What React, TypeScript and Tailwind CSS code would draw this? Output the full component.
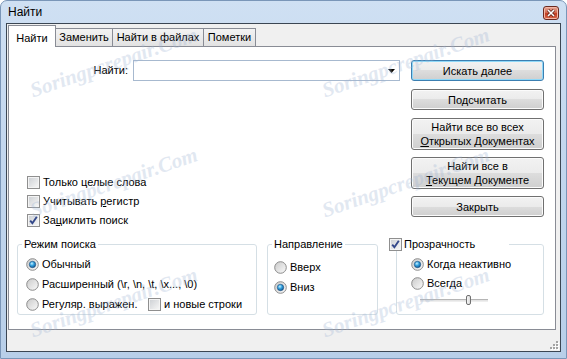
import clsx from "clsx";

function CheckBox({ checked = false }: { checked?: boolean }) {
  return (
    <span className="flex w-[13px] h-[13px] shrink-0 items-center justify-center border border-[#8f8f8f] bg-[#f4f4f4]">
      <span className="flex w-[9px] h-[9px] items-center justify-center bg-[linear-gradient(135deg,#cfd2d6,#f5f5f5)]">
        {checked && (
          <svg width="11" height="11" viewBox="0 0 11 11" className="shrink-0">
            <path d="M2.2 5.6 L4.4 8.2 L8.8 1.8" fill="none" stroke="#34488a" strokeWidth="1.9" />
          </svg>
        )}
      </span>
    </span>
  );
}

function Radio({ checked = false }: { checked?: boolean }) {
  return (
    <svg width="13" height="13" viewBox="0 0 13 13" className="shrink-0">
      <defs>
        <linearGradient id="rb-bg" x1="0" y1="0" x2="1" y2="1">
          <stop offset="0" stopColor="#c9c9c9" />
          <stop offset="1" stopColor="#fbfbfb" />
        </linearGradient>
        <radialGradient id="rb-dot" cx="0.4" cy="0.35" r="0.7">
          <stop offset="0" stopColor="#c8f1ff" />
          <stop offset="0.45" stopColor="#35a3e0" />
          <stop offset="1" stopColor="#0c4f8a" />
        </radialGradient>
      </defs>
      <circle cx="6.5" cy="6.5" r="5.8" fill="url(#rb-bg)" stroke="#8c8c8c" strokeWidth="1" />
      {checked && <circle cx="6.5" cy="6.5" r="3.2" fill="url(#rb-dot)" stroke="#1c4e7e" strokeWidth="0.6" />}
    </svg>
  );
}

function Btn({
  children,
  className,
  focused = false,
}: {
  children: React.ReactNode;
  className?: string;
  focused?: boolean;
}) {
  return (
    <button
      className={clsx(
        "w-[133px] flex flex-col items-center justify-center rounded-[3px] border text-[11px] leading-[14px] text-black bg-[linear-gradient(#f2f2f2,#ebebeb_50%,#dddddd_50%,#cfcfcf)]",
        focused
          ? "border-[#3c7fb1] shadow-[inset_0_0_0_1px_#8fd8f8]"
          : "border-[#707070] shadow-[inset_0_0_0_1px_#fbfbfb]",
        className
      )}
    >
      {children}
    </button>
  );
}

const tabs = [
  { label: "Заменить", w: "w-[58px]" },
  { label: "Найти в файлах", w: "w-[92px]" },
  { label: "Пометки", w: "w-[53px]" },
];

const marks = [
  "left-[113px] top-[62px]",
  "left-[405px] top-[62px]",
  "left-[113px] top-[182px]",
  "left-[405px] top-[182px]",
  "left-[113px] top-[302px]",
  "left-[405px] top-[302px]",
];

export default function App() {
  return (
    <div className="relative w-[567px] h-[359px] flex flex-col overflow-hidden rounded-t-[7px] border border-[#7a96b8] bg-[linear-gradient(#cfe0f3,#c3d7ee_40%,#b8cfe9)] font-['Liberation_Sans',Arial,sans-serif] text-[11px] text-black">
      {/* Title bar */}
      <div className="h-[22px] flex items-start justify-between pl-[7px] pr-[7px]">
        <span className="mt-[3px] text-[12px] leading-[16px]">Найти</span>
        <span className="mt-[5px] flex w-[16px] h-[14px] items-center justify-center rounded-[3px] border border-[#6b2a20] bg-[linear-gradient(#e9a999,#d16a52_45%,#c23d22_55%,#d9694c)] shadow-[inset_0_0_0_1px_#f3b7a6]">
          <svg width="8" height="8" viewBox="0 0 8 8">
            <path d="M1 1 L7 7 M7 1 L1 7" stroke="#5a1e14" strokeWidth="3" />
            <path d="M1 1 L7 7 M7 1 L1 7" stroke="#ffffff" strokeWidth="1.6" />
          </svg>
        </span>
      </div>

      {/* Client area */}
      <div className="flex-1 mx-[5px] mb-[6px] flex flex-col border border-[#3b4653] bg-[#f0f0f0]">
        <div className="mt-[1px] ml-[1px] mr-[4px]">
          {/* Tabs */}
          <div className="h-[21px] flex items-end">
            <div className="relative z-10 -mb-[1px] w-[48px] h-[22px] flex items-start justify-center pt-[4px] border-l border-t border-r border-[#898c95] bg-white">
              Найти
            </div>
            {tabs.map((t) => (
              <div
                key={t.label}
                className={clsx(
                  "ml-[-1px] first:ml-0 h-[18px] flex items-center justify-center border-l border-t border-r border-[#898c95] bg-[linear-gradient(#f3f3f3,#e2e2e2)]",
                  t.w
                )}
              >
                {t.label}
              </div>
            ))}
          </div>

          {/* Tab panel */}
          <div className="h-[284px] border border-[#898c95] bg-white">
            <div className="flex pt-[13px]">
              <div className="w-[402px] flex flex-col">
                <div className="h-[21px] flex items-center">
                  <span className="w-[119px] text-right">Найти:</span>
                  <div className="ml-[5px] w-[267px] h-[21px] flex items-center justify-end pr-[4px] border border-[#a7b9cf] bg-white">
                    <svg width="7" height="4" viewBox="0 0 7 4">
                      <path d="M0 0 H7 L3.5 4 Z" fill="#000" />
                    </svg>
                  </div>
                </div>
                <div className="mt-[92px] pl-[18px] flex flex-col">
                  <label className="h-[19px] flex items-center gap-[3px]">
                    <CheckBox />
                    <span>Только целые слова</span>
                  </label>
                  <label className="h-[19px] flex items-center gap-[3px]">
                    <CheckBox />
                    <span>
                      Учитывать <u>р</u>егистр
                    </span>
                  </label>
                  <label className="h-[19px] flex items-center gap-[3px]">
                    <CheckBox checked />
                    <span>
                      За<u>ц</u>иклить поиск
                    </span>
                  </label>
                </div>
              </div>

              <div className="flex flex-col">
                <Btn focused className="h-[21px]">Искать далее</Btn>
                <Btn className="mt-[8px] h-[21px]">Подсчитать</Btn>
                <Btn className="mt-[8px] h-[32px]">
                  <span>Найти все во всех</span>
                  <span>
                    <u>О</u>ткрытых Документах
                  </span>
                </Btn>
                <Btn className="mt-[7px] h-[32px]">
                  <span>Найти все в</span>
                  <span>
                    <u>Т</u>екущем Документе
                  </span>
                </Btn>
                <Btn className="mt-[7px] h-[21px]">Закрыть</Btn>
              </div>
            </div>

            {/* Groups */}
            <div className="mt-[8px] pl-[8px] flex items-start">
              <fieldset className="w-[240px] h-[77px] rounded-[3px] border border-[#d5dfe5]">
                <legend className="ml-[4px] px-[2px] leading-[13px]">Режим поиска</legend>
                <div className="pt-[3px] pl-[8px] flex flex-col">
                  <div className="h-[20px] flex items-center gap-[3px]">
                    <Radio checked />
                    <span>Обычный</span>
                  </div>
                  <div className="h-[20px] flex items-center gap-[3px]">
                    <Radio />
                    <span>Расширенный (\r, \n, \t, \x..., \0)</span>
                  </div>
                  <div className="h-[20px] flex items-center gap-[3px]">
                    <Radio />
                    <span className="w-[103px]">Регуляр. выражен.</span>
                    <CheckBox />
                    <span>и новые строки</span>
                  </div>
                </div>
              </fieldset>

              <fieldset className="ml-[10px] w-[111px] h-[77px] rounded-[3px] border border-[#d5dfe5]">
                <legend className="ml-[4px] px-[2px] leading-[13px]">Направление</legend>
                <div className="pt-[6px] pl-[6px] flex flex-col">
                  <div className="h-[20px] flex items-center gap-[3px]">
                    <Radio />
                    <span>Вверх</span>
                  </div>
                  <div className="h-[20px] flex items-center gap-[3px]">
                    <Radio checked />
                    <span>Вниз</span>
                  </div>
                </div>
              </fieldset>

              <fieldset className="ml-[18px] w-[148px] h-[77px] rounded-[3px] border border-[#d5dfe5]">
                <legend className="-ml-[8px] w-[120px] h-[13px] flex items-center gap-[2px] bg-white">
                  <CheckBox checked />
                  <span>Прозрачность</span>
                </legend>
                <div className="pt-[4px] pl-[14px] flex flex-col">
                  <div className="h-[19px] flex items-center gap-[3px]">
                    <Radio checked />
                    <span>Когда неактивно</span>
                  </div>
                  <div className="h-[19px] flex items-center gap-[3px]">
                    <Radio />
                    <span>Всегда</span>
                  </div>
                  <div className="mt-[1px] ml-[9px] h-[12px] flex items-center">
                    <div className="relative w-[68px] h-[3px] border-t border-[#b5b5b5] border-b border-b-[#eeeeee] bg-[#e4e4e4]">
                      <span className="absolute left-[46px] top-[-5px] w-[5px] h-[10px] rounded-[2px] border border-[#707070] bg-[linear-gradient(90deg,#f6f6f6,#dcdcdc)]" />
                    </div>
                  </div>
                </div>
              </fieldset>
            </div>
          </div>
        </div>

        {/* Status strip with size grip */}
        <div className="flex-1 flex items-end justify-end pr-[1px] pb-[1px]">
          <svg width="10" height="10" viewBox="0 0 10 10">
            {[
              [7, 1],
              [4, 4],
              [7, 4],
              [1, 7],
              [4, 7],
              [7, 7],
            ].map(([x, y]) => (
              <g key={`${x}-${y}`}>
                <rect x={x + 1} y={y + 1} width="2" height="2" fill="#ffffff" />
                <rect x={x} y={y} width="2" height="2" fill="#a4a4a4" />
              </g>
            ))}
          </svg>
        </div>
      </div>

      {/* Watermark */}
      {marks.map((m) => (
        <span
          key={m}
          className={clsx(
            "pointer-events-none select-none absolute -translate-x-1/2 -translate-y-1/2 -rotate-[19deg] whitespace-nowrap font-['Liberation_Serif',serif] italic font-bold text-[21px] text-[#9fb4d4] opacity-[0.3]",
            m
          )}
        >
          Soringpcrepair.Com
        </span>
      ))}
    </div>
  );
}
